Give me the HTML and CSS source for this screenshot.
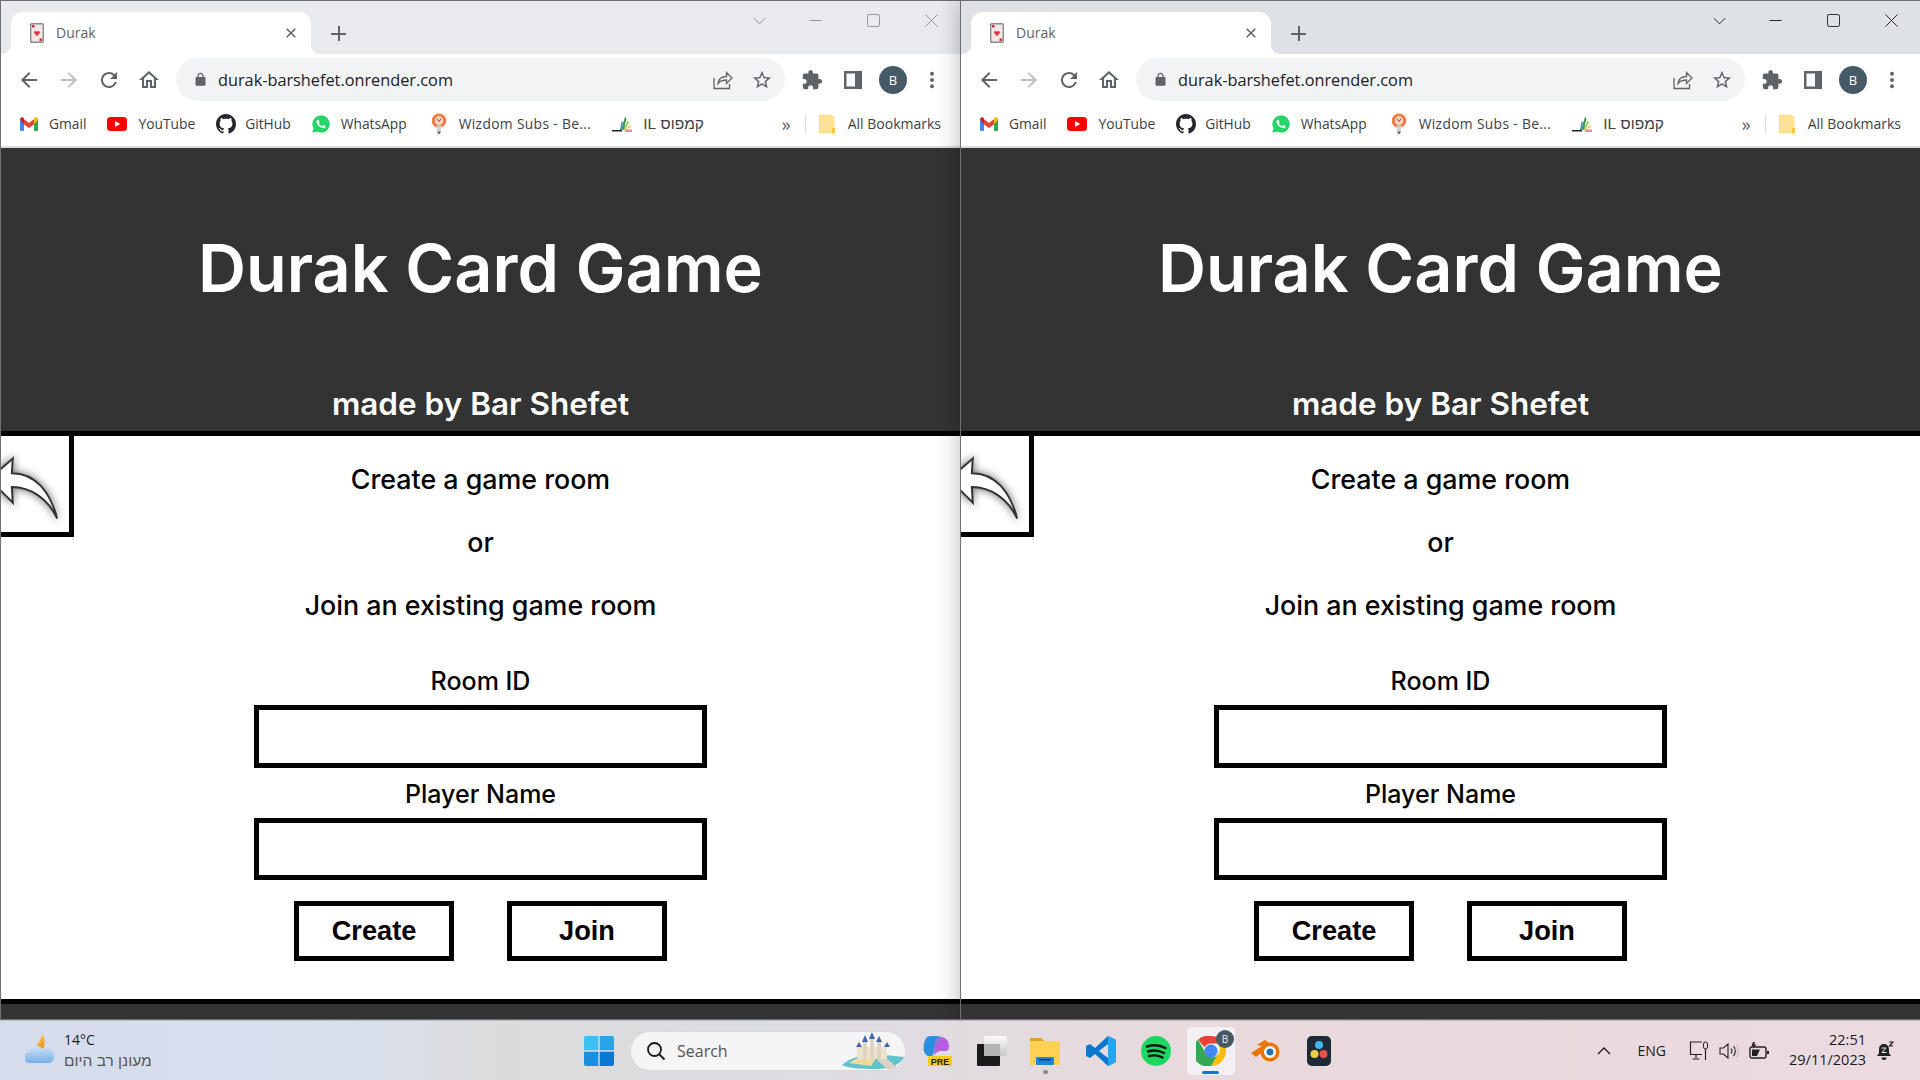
FILE: index.html
```html
<!DOCTYPE html>
<html lang="en">
<head>
    <meta charset="UTF-8">
    <title>Durak</title>
    <link rel="stylesheet" href="styles.css">
</head>
<body>
<!-- shared icons -->
<svg class="sprite" xmlns="http://www.w3.org/2000/svg">
    <defs>
        <linearGradient id="g-cloud" x1="0" y1="0" x2="0" y2="1"><stop offset="0" stop-color="#cfe3f9"/><stop offset="1" stop-color="#78b0e8"/></linearGradient>
        <linearGradient id="g-moon" x1="0" y1="0" x2="0" y2="1"><stop offset="0" stop-color="#fbc04a"/><stop offset="1" stop-color="#ef8f24"/></linearGradient>
        <linearGradient id="g-white" x1="0" y1="0" x2="0" y2="1"><stop offset="0" stop-color="#fafafa"/><stop offset="1" stop-color="#c9c9c9"/></linearGradient>
    </defs>
    <symbol id="i-card" viewBox="0 0 14 20">
        <rect x=".7" y=".7" width="12.6" height="18.6" rx="1" fill="#f3e6e6" stroke="#8a8a8a" stroke-width="1.4"/>
        <path d="M7 13.2 4.2 10c-1-1.5 1.6-3 2.8-1.2C8.2 7 10.800 8.500 9.800 10z" fill="#e0343f"/>
        <rect x="2" y="2" width="2.500" height="2.500" fill="#c8323c"/>
        <rect x="9.500" y="15.500" width="2.500" height="2.500" fill="#c8323c"/>
    </symbol>
    <symbol id="i-back" viewBox="0 0 24 24"><path d="M20 11H7.800l5.600-5.600L12 4l-8 8 8 8 1.400-1.400L7.800 13H20z"/></symbol>
    <symbol id="i-reload" viewBox="0 0 24 24"><path d="M17.650 6.350A7.958 7.958 0 0012 4c-4.420 0-7.990 3.580-7.990 8s3.570 8 7.990 8c3.730 0 6.840-2.550 7.730-6h-2.080A5.990 5.990 0 0112 18c-3.310 0-6-2.690-6-6s2.690-6 6-6c1.660 0 3.140.690 4.220 1.780L13 11h7V4l-2.350 2.350z"/></symbol>
    <symbol id="i-home" viewBox="0 0 24 24"><path d="M12 5.690l5 4.500V18h-2v-6H9v6H7v-7.810l5-4.500M12 3L2 12h3v8h6v-6h2v6h6v-8h3L12 3z"/></symbol>
    <symbol id="i-lock" viewBox="0 0 24 24"><path d="M18 8h-1V6c0-2.760-2.240-5-5-5S7 3.240 7 6v2H6c-1.100 0-2 .9-2 2v10c0 1.100.9 2 2 2h12c1.100 0 2-.9 2-2V10c0-1.100-.9-2-2-2zM9 6c0-1.660 1.340-3 3-3s3 1.340 3 3v2H9V6z"/></symbol>
    <symbol id="i-share" viewBox="0 0 20 20"><path d="M1 8v10.500h15.500V14M5 13.500c.5-4.500 4-7 8.500-7V2.500l5.500 5.500-5.500 5.500V10c-3.500 0-6.500 1-8.500 3.500z" fill="none" stroke="currentColor" stroke-width="1.300"/></symbol>
    <symbol id="i-star" viewBox="0 0 24 24"><path d="M22 9.240l-7.190-.62L12 2 9.190 8.630 2 9.240l5.460 4.730L5.820 21 12 17.270 18.180 21l-1.630-7.030L22 9.240zM12 15.400l-3.760 2.270 1-4.280-3.320-2.880 4.380-.38L12 6.100l1.710 4.040 4.380.38-3.320 2.880 1 4.280L12 15.400z"/></symbol>
    <symbol id="i-puzzle" viewBox="0 0 24 24"><path d="M20.500 11H19V7c0-1.100-.9-2-2-2h-4V3.500C13 2.120 11.880 1 10.500 1S8 2.120 8 3.500V5H4c-1.100 0-1.990.9-1.990 2v3.800H3.500c1.490 0 2.700 1.210 2.700 2.700s-1.210 2.700-2.700 2.700H2V20c0 1.100.9 2 2 2h3.800v-1.500c0-1.490 1.210-2.700 2.700-2.700 1.490 0 2.700 1.210 2.700 2.700V22H17c1.100 0 2-.9 2-2v-4h1.500c1.380 0 2.500-1.120 2.500-2.500S21.880 11 20.500 11z"/></symbol>
    <symbol id="i-panel" viewBox="0 0 18 18"><path fill-rule="evenodd" d="M0 0h18v18H0zM2.500 2.500v13H11v-13z"/></symbol>
    <symbol id="i-dots" viewBox="0 0 6 20"><circle cx="3" cy="3" r="2.200"/><circle cx="3" cy="10" r="2.200"/><circle cx="3" cy="17" r="2.200"/></symbol>
    <symbol id="i-x" viewBox="0 0 10 10"><path d="M.7.700l8.600 8.600M9.300.700.700 9.300" fill="none" stroke="currentColor" stroke-width="1.500"/></symbol>
    <symbol id="i-gmail" viewBox="0 0 18 14">
        <path d="M0 2.500 1.500.6 4 2.200V14H1.200C.5 14 0 13.500 0 12.800z" fill="#4285f4"/>
        <path d="M18 2.500 16.500.6 14 2.200V14h2.800c.7 0 1.200-.5 1.200-1.200z" fill="#34a853"/>
        <path d="M4 2.200 9 6l5-3.800V7.500L9 11 4 7.500z" fill="#ea4335"/>
        <path d="M0 2.500C0 .5 2.200-.5 3.500.6L4 2.200V7.500z" fill="#c5221f"/>
        <path d="M18 2.500C18 .5 15.800-.5 14.500.6L14 2.200V7.500z" fill="#fbbc04"/>
    </symbol>
    <symbol id="i-youtube" viewBox="0 0 20 14"><rect width="20" height="14" rx="3.500" fill="#f00"/><path d="M8 4l5.200 3L8 10z" fill="#fff"/></symbol>
    <symbol id="i-github" viewBox="0 0 16 16"><path fill="#24292f" d="M8 0C3.580 0 0 3.580 0 8c0 3.540 2.290 6.530 5.470 7.590.4.070.55-.17.55-.38 0-.19-.01-.82-.01-1.490-2.010.37-2.530-.49-2.690-.94-.09-.23-.48-.94-.82-1.130-.28-.15-.68-.52-.01-.53.63-.01 1.080.58 1.230.82.72 1.210 1.870.87 2.330.66.070-.52.28-.87.51-1.070-1.780-.2-3.640-.89-3.640-3.950 0-.87.31-1.590.82-2.150-.08-.2-.36-1.020.08-2.120 0 0 .67-.21 2.200.82.64-.18 1.320-.27 2-.27.68 0 1.360.090 2 .27 1.530-1.040 2.200-.82 2.200-.82.44 1.100.16 1.920.08 2.120.51.56.82 1.270.82 2.150 0 3.070-1.870 3.750-3.650 3.950.29.25.54.73.54 1.480 0 1.070-.01 1.930-.01 2.200 0 .21.15.46.55.38A8.013 8.013 0 0016 8c0-4.420-3.580-8-8-8z"/></symbol>
    <symbol id="i-whatsapp" viewBox="0 0 24 24"><path fill="#25d366" d="M12 .5a11.500 11.500 0 0 0-9.900 17.300L.5 23.500l5.900-1.500A11.500 11.500 0 1 0 12 .5z"/><path fill="#fff" d="M17.472 14.382c-.297-.149-1.758-.867-2.030-.967-.273-.099-.471-.148-.67.150-.197.297-.767.966-.94 1.164-.173.199-.347.223-.644.075-.297-.150-1.255-.463-2.390-1.475-.883-.788-1.480-1.761-1.653-2.059-.173-.297-.018-.458.130-.606.134-.133.298-.347.446-.520.149-.174.198-.298.298-.497.099-.198.050-.371-.025-.520-.075-.149-.669-1.612-.916-2.207-.242-.579-.487-.5-.669-.510-.173-.008-.371-.010-.570-.010-.198 0-.52.074-.792.372-.272.297-1.040 1.016-1.040 2.479 0 1.462 1.065 2.875 1.213 3.074.149.198 2.096 3.200 5.077 4.487.709.306 1.262.489 1.694.625.712.227 1.360.195 1.871.118.571-.085 1.758-.719 2.006-1.413.248-.694.248-1.289.173-1.413-.074-.124-.272-.198-.570-.347z"/></symbol>
    <symbol id="i-wizdom" viewBox="0 0 16 22"><circle cx="8" cy="8" r="7.500" fill="#ee7b43"/><circle cx="8" cy="8" r="4.500" fill="#f4d5c2"/><path d="M5.500 13h5l-.8 6h-3.400z" fill="#d8cfc6"/><path d="M6 19h4l-1 3H7z" fill="#777"/><path d="M6 6l2 3 2-3" fill="none" stroke="#a14f24" stroke-width="1"/></symbol>
    <symbol id="i-campus" viewBox="0 0 20 16"><path d="M0 14h10v1.500H0z" fill="#222"/><path d="M9 14 13 1l1.500 1-2.500 12z" fill="#3a9a4d"/><path d="M11 14l5-9 1 1.500L12.500 14z" fill="#8bc34a"/><path d="M12 14l6-5 .8 1.500L13.500 14z" fill="#f2c94c"/><path d="M13 13.500h7V16h-7z" fill="#ef8f9a"/><path d="M8 14 9.500 6 11 5l-1 9z" fill="#4a90c2"/></symbol>
    <symbol id="i-folder" viewBox="0 0 16 20"><path d="M1.500.5h11l3 3v14.500a1.500 1.500 0 0 1-1.500 1.500H1.500A1.500 1.500 0 0 1 0 18V2A1.500 1.500 0 0 1 1.500.5z" fill="#fde293"/><path d="M13 14h3v5.500h-3z" fill="#f6c945"/></symbol>
</svg>

<div class="desktop">

    <section class="window inactive">
        <div class="tabstrip">
            <div class="tab">
                <svg class="favicon"><use href="#i-card"/></svg>
                <span class="tab-title">Durak</span>
                <svg class="tab-close"><use href="#i-x"/></svg>
            </div>
            <span class="new-tab"></span>
            <svg class="win-btn tab-search" viewBox="0 0 14 8"><path d="M1 1l6 6 6-6" fill="none" stroke="currentColor"/></svg>
            <svg class="win-btn" viewBox="0 0 14 14"><path d="M.5 7h13" stroke="currentColor"/></svg>
            <svg class="win-btn" viewBox="0 0 14 14"><rect x=".5" y=".5" width="13" height="13" rx="2" fill="none" stroke="currentColor"/></svg>
            <svg class="win-btn" viewBox="0 0 14 14"><path d="M.5.5l13 13M13.500.5l-13 13" stroke="currentColor"/></svg>
        </div>
        <div class="toolbar">
            <svg class="tool"><use href="#i-back"/></svg>
            <svg class="tool disabled"><use href="#i-back" transform="rotate(180 12 12)"/></svg>
            <svg class="tool"><use href="#i-reload"/></svg>
            <svg class="tool"><use href="#i-home"/></svg>
            <div class="omnibox">
                <svg class="lock"><use href="#i-lock"/></svg>
                <span class="url">durak-barshefet.onrender.com</span>
                <svg class="omni-icon share"><use href="#i-share"/></svg>
                <svg class="omni-icon"><use href="#i-star"/></svg>
            </div>
            <svg class="tool puzzle"><use href="#i-puzzle"/></svg>
            <svg class="tool panel"><use href="#i-panel"/></svg>
            <span class="avatar">B</span>
            <svg class="tool dots"><use href="#i-dots"/></svg>
        </div>
        <div class="bookmarks">
            <a class="bm"><svg class="bm-icon gmail"><use href="#i-gmail"/></svg>Gmail</a>
            <a class="bm"><svg class="bm-icon youtube"><use href="#i-youtube"/></svg>YouTube</a>
            <a class="bm"><svg class="bm-icon github"><use href="#i-github"/></svg>GitHub</a>
            <a class="bm"><svg class="bm-icon whatsapp"><use href="#i-whatsapp"/></svg>WhatsApp</a>
            <a class="bm wizdom-link"><svg class="bm-icon wizdom"><use href="#i-wizdom"/></svg>Wizdom Subs - Be...</a>
            <a class="bm"><svg class="bm-icon campus"><use href="#i-campus"/></svg><span class="hebrew" dir="rtl">קמפוס IL</span></a>
            <span class="bm-more">»</span>
            <span class="bm-sep"></span>
            <a class="bm all"><svg class="bm-icon folder"><use href="#i-folder"/></svg>All Bookmarks</a>
        </div>
        <div class="page">
            <header class="site-header">
                <h1>Durak Card Game</h1>
                <h2>made by Bar Shefet</h2>
            </header>
            <main class="lobby">
                <button class="back-btn">
                    <svg class="back-arrow" viewBox="0 0 69 95"><path d="M12 21 -12 42 12 66 11 50C30 50 48 62 57 82 50 55 35 36 11 36Z"/></svg>
                </button>
                <p class="lead">Create a game room</p>
                <p class="lead">or</p>
                <p class="lead">Join an existing game room</p>
                <label class="field-label first">Room ID</label>
                <input class="field" type="text">
                <label class="field-label">Player Name</label>
                <input class="field second" type="text">
                <div class="actions">
                    <button class="action">Create</button>
                    <button class="action">Join</button>
                </div>
            </main>
            <footer class="site-footer"></footer>
        </div>
    </section>

    <section class="window active">
        <div class="tabstrip">
            <div class="tab">
                <svg class="favicon"><use href="#i-card"/></svg>
                <span class="tab-title">Durak</span>
                <svg class="tab-close"><use href="#i-x"/></svg>
            </div>
            <span class="new-tab"></span>
            <svg class="win-btn tab-search" viewBox="0 0 14 8"><path d="M1 1l6 6 6-6" fill="none" stroke="currentColor"/></svg>
            <svg class="win-btn" viewBox="0 0 14 14"><path d="M.5 7h13" stroke="currentColor"/></svg>
            <svg class="win-btn" viewBox="0 0 14 14"><rect x=".5" y=".5" width="13" height="13" rx="2" fill="none" stroke="currentColor"/></svg>
            <svg class="win-btn" viewBox="0 0 14 14"><path d="M.5.5l13 13M13.500.5l-13 13" stroke="currentColor"/></svg>
        </div>
        <div class="toolbar">
            <svg class="tool"><use href="#i-back"/></svg>
            <svg class="tool disabled"><use href="#i-back" transform="rotate(180 12 12)"/></svg>
            <svg class="tool"><use href="#i-reload"/></svg>
            <svg class="tool"><use href="#i-home"/></svg>
            <div class="omnibox">
                <svg class="lock"><use href="#i-lock"/></svg>
                <span class="url">durak-barshefet.onrender.com</span>
                <svg class="omni-icon share"><use href="#i-share"/></svg>
                <svg class="omni-icon"><use href="#i-star"/></svg>
            </div>
            <svg class="tool puzzle"><use href="#i-puzzle"/></svg>
            <svg class="tool panel"><use href="#i-panel"/></svg>
            <span class="avatar">B</span>
            <svg class="tool dots"><use href="#i-dots"/></svg>
        </div>
        <div class="bookmarks">
            <a class="bm"><svg class="bm-icon gmail"><use href="#i-gmail"/></svg>Gmail</a>
            <a class="bm"><svg class="bm-icon youtube"><use href="#i-youtube"/></svg>YouTube</a>
            <a class="bm"><svg class="bm-icon github"><use href="#i-github"/></svg>GitHub</a>
            <a class="bm"><svg class="bm-icon whatsapp"><use href="#i-whatsapp"/></svg>WhatsApp</a>
            <a class="bm wizdom-link"><svg class="bm-icon wizdom"><use href="#i-wizdom"/></svg>Wizdom Subs - Be...</a>
            <a class="bm"><svg class="bm-icon campus"><use href="#i-campus"/></svg><span class="hebrew" dir="rtl">קמפוס IL</span></a>
            <span class="bm-more">»</span>
            <span class="bm-sep"></span>
            <a class="bm all"><svg class="bm-icon folder"><use href="#i-folder"/></svg>All Bookmarks</a>
        </div>
        <div class="page">
            <header class="site-header">
                <h1>Durak Card Game</h1>
                <h2>made by Bar Shefet</h2>
            </header>
            <main class="lobby">
                <button class="back-btn">
                    <svg class="back-arrow" viewBox="0 0 69 95"><path d="M12 21 -12 42 12 66 11 50C30 50 48 62 57 82 50 55 35 36 11 36Z"/></svg>
                </button>
                <p class="lead">Create a game room</p>
                <p class="lead">or</p>
                <p class="lead">Join an existing game room</p>
                <label class="field-label first">Room ID</label>
                <input class="field" type="text">
                <label class="field-label">Player Name</label>
                <input class="field second" type="text">
                <div class="actions">
                    <button class="action">Create</button>
                    <button class="action">Join</button>
                </div>
            </main>
            <footer class="site-footer"></footer>
        </div>
    </section>
</div>

<div class="taskbar">
    <div class="weather">
        <svg class="weather-icon" viewBox="0 0 30 30">
            <path d="M17 0c3 4 4 10 1 16H0c5 1 10-2 13-6 2-3 3-6 4-10z" fill="url(#g-moon)"/>
            <path d="M5 29a5.500 5.500 0 0 1-1-11 8 8 0 0 1 14-3 7 7 0 0 1 7 14z" fill="url(#g-cloud)"/>
        </svg>
        <div class="weather-text">
            <span class="temp">14°C</span>
            <span class="forecast hebrew" dir="rtl">מעונן רב היום</span>
        </div>
    </div>

    <div class="task-icons">
        <svg class="start" viewBox="0 0 30 30">
            <path d="M0 2a2 2 0 0 1 2-2h12.300v14.300H0z" fill="#3cc0f2"/><path d="M15.700 0H28a2 2 0 0 1 2 2v12.300H15.700z" fill="#27a3ea"/>
            <path d="M0 15.700h14.300V30H2a2 2 0 0 1-2-2z" fill="#1a8fe0"/><path d="M15.700 15.700H30V28a2 2 0 0 1-2 2H15.700z" fill="#0a78d4"/>
        </svg>
        <div class="search-pill">
            <svg class="search-glass" viewBox="0 0 20 20"><circle cx="8.500" cy="8.500" r="6.500" fill="none" stroke="#1a1a1a" stroke-width="1.800"/><path d="M13.500 13.500l5 5" stroke="#1a1a1a" stroke-width="1.800"/></svg>
            <span class="search-text">Search</span>
            <svg class="search-art" viewBox="0 0 64 38">
                <path d="M1 33c8-7 20-11 34-11l28 3c-3 7-12 12-28 12-16 0-28-1-34-4z" fill="#5fc3c9"/>
                <path d="M8 31c8-6 18-8 28-6l-6 9z" fill="#efd9a0"/>
                <path d="M36 28l8-3 12 10-9 3z" fill="#d9d2c6"/>
                <path d="M16 15h30v12H16z" fill="#ece3d0"/>
                <path d="M22 10h4v17h-4zM36 10h4v17h-4zM29 7h4v20h-4z" fill="#dfd4bd"/>
                <path d="M24 3l-3 7h6zM38 4l-3 6h6zM31 0l-3 7h6zM18 10l-3 5h6zM46 10l-3 5h6z" fill="#3f66b0"/>
            </svg>
        </div>
        <div class="apps">
            <svg class="app" viewBox="0 0 30 30">
                <path d="M5 1c5-2 11-1 15 0-4 1-7 4-7 8 0 4-1 8-3 12-4 0-6-2-8-5C1 11 2 4 5 1z" fill="#2a8fe0"/>
                <path d="M20 1c4 1 7 4 7 9 0 3-1 5-3 5h-5c-3 0-6 2-7 5 1-5 0-11 1-14 1-3 4-5 7-5z" fill="#b55fe0"/>
                <path d="M13 10c0-3 2-6 5-7h2c-3 1-7 4-7 7z" fill="#38c7a0"/>
                <rect x="6" y="20" width="24" height="10" rx="1" fill="#ffcb1f"/>
                <text x="18" y="28.500" class="pre-label">PRE</text>
            </svg>
            <svg class="app" viewBox="0 0 30 30">
                <rect x="0" y="8" width="23" height="22" rx="1" fill="#1b1b1b"/>
                <rect x="7" y="0" width="23" height="20" rx="1" fill="url(#g-white)"/>
                <rect x="7" y="8" width="16" height="12" fill="#b5b5b5"/>
            </svg>
            <div class="app-slot open">
                <svg class="app" viewBox="0 0 30 30">
                    <path d="M0 2h11l3 3h-14z" fill="#e3a21a"/>
                    <rect x="0" y="5" width="30" height="24" rx="1" fill="#ffd152"/>
                    <rect x="6" y="21" width="18" height="8" rx="1" fill="#1c88d6"/>
                    <rect x="9" y="23" width="12" height="1.500" fill="#0d3f6e"/>
                </svg>
            </div>
            <svg class="app" viewBox="0 0 30 30">
                <path fill-rule="evenodd" d="M22 0 30 4V26L22 30 9 18 4 22 0 20V10L4 8 9 12zM22 8V22L13 15z" fill="#0a78cc"/>
                <path d="M22 0 30 4V26L22 30z" fill="#22a7f0"/>
            </svg>
            <svg class="app" viewBox="0 0 30 30">
                <circle cx="15" cy="15" r="15" fill="#1ed760"/>
                <path d="M6 10.500c6-2 13-1.500 18.500 1.500M7 15.500c5-1.500 11-1 16 1.500M8 20c4.500-1 9.500-.8 13.500 1.500" fill="none" stroke="#111" stroke-width="2.400" stroke-linecap="round"/>
            </svg>
            <div class="app-slot chrome-slot">
                <svg class="app" viewBox="0 0 30 30">
                    <path d="M15 0a15 15 0 0 1 13 7.500H15a7.500 7.500 0 0 0-6.500 3.800L2 3.800A15 15 0 0 1 15 0z" fill="#ea4335"/>
                    <path d="M28 7.500A15 15 0 0 1 15 30l6.500-11.200a7.500 7.500 0 0 0 0-11.300z" fill="#fbbc04"/>
                    <path d="M15 30A15 15 0 0 1 2 3.800l6.500 11.200a7.500 7.500 0 0 0 13 3.800z" fill="#34a853"/>
                    <circle cx="15" cy="15" r="6.500" fill="#4285f4"/>
                </svg>
                <span class="chrome-badge">B</span>
            </div>
            <svg class="app" viewBox="0 0 30 30">
                <circle cx="19" cy="16" r="9.500" fill="#ea7600"/>
                <circle cx="19" cy="16" r="6" fill="#fff"/>
                <circle cx="19" cy="16" r="3.500" fill="#2a6fb0"/>
                <path d="M0 17l11-7-5-1 8-5 4 3-8 10-5 4z" fill="#ea7600"/>
            </svg>
            <svg class="app resolve" viewBox="0 0 24 30">
                <rect width="24" height="30" rx="5" fill="#1e2a35"/>
                <circle cx="12" cy="9" r="4" fill="#40b8e8"/>
                <circle cx="7.500" cy="18" r="4" fill="#e8d24a"/>
                <circle cx="16.500" cy="18" r="4" fill="#e8524a"/>
            </svg>
        </div>
    </div>

    <div class="tray">
        <svg class="tray-icon caret" viewBox="0 0 14 8"><path d="M1 7l6-6 6 6" fill="none" stroke="#1a1a1a" stroke-width="1.300"/></svg>
        <span class="lang">ENG</span>
        <svg class="tray-icon monitor" viewBox="0 0 20 20"><path d="M13 1H1.500v12.500H13M7 13.500V17M3.500 18h7M16.500 8v11" fill="none" stroke="#222" stroke-width="1.200"/><rect x="14.500" y="1" width="4" height="7" rx="2" fill="none" stroke="#222"/></svg>
        <svg class="tray-icon speaker" viewBox="0 0 20 20"><path d="M1 7h3.500L9 3v14l-4.500-4H1zM12 7.500c1.200 1.500 1.200 3.500 0 5M14.500 5c2.200 3 2.200 7 0 10" fill="none" stroke="#222" stroke-width="1.100"/><path d="M17 3c3 4 3 10 0 14" fill="none" stroke="#bbb"/></svg>
        <svg class="tray-icon battery" viewBox="0 0 20 20"><rect x="1" y="6" width="16" height="11" rx="2" fill="none" stroke="#222" stroke-width="1.400"/><path d="M3 8.500h8l-3 6.500H3z" fill="#222"/><path d="M18 10h2v3h-2zM4 1 2.500 5 5 5 4 8l3.500-4.500H5L6 1z" fill="#222"/></svg>
        <div class="clock"><span>22:51</span><span>29/11/2023</span></div>
        <svg class="tray-icon bell" viewBox="0 0 18 20"><path d="M8 3c-3.500 0-5 2.500-5 5.500V12l-2 3h14l-2-3V8.500C13 5.500 11.500 3 8 3z" fill="#222"/><path d="M5.500 16.500h5a2.500 2.500 0 0 1-5 0z" fill="#222"/><path d="M5.500 7h4.500l-4 4.500h4.500" fill="none" stroke="#eee"/><path d="M13 1h4l-3.500 4H17" fill="none" stroke="#222" stroke-width="1.200"/></svg>
    </div>
</div>
</body>
</html>
```
FILE: styles.css
```css
* {
    box-sizing: border-box;
}

body {
    margin: 0;
    width: 1920px;
    height: 1080px;
    overflow: hidden;
    font-family: "Open Sans", "Liberation Sans", sans-serif;
    color: #202124;
}

.sprite {
    position: absolute;
    width: 0;
    height: 0;
}

.desktop {
    display: flex;
    height: 1020px;
}

.window {
    position: relative;
    display: flex;
    flex-direction: column;
    width: 960px;
    height: 1020px;
    border: 1px solid #6f6f6f;
    border-width: 1px 0 1px 1px;
    background: #fff;
}

.window.active {
    box-shadow: 0 0 22px rgba(0, 0, 0, .28);
    z-index: 1;
}

/* tab strip */
.tabstrip {
    display: flex;
    align-items: flex-start;
    height: 53px;
    padding: 11px 0 0 10px;
    background: #dee1e6;
    color: #1a1a1a;
}

.inactive .tabstrip {
    background: #e8eaed;
    color: #8b8d90;
}

.tab {
    position: relative;
    display: flex;
    align-items: center;
    width: 300px;
    height: 42px;
    padding: 0 15px 0 19px;
    background: #fff;
    border-radius: 12px 12px 0 0;
}

.tab::before,
.tab::after {
    content: "";
    position: absolute;
    bottom: 0;
    width: 10px;
    height: 10px;
}

.tab::before {
    left: -10px;
    background: radial-gradient(circle at 0 0, transparent 10px, #fff 10.500px);
}

.tab::after {
    right: -10px;
    background: radial-gradient(circle at 100% 0, transparent 10px, #fff 10.500px);
}

.favicon {
    width: 14px;
    height: 20px;
    flex: none;
}

.tab-title {
    flex: 1;
    margin: -2px 0 0 12px;
    font-size: 14px;
    color: #5f6368;
}

.tab-close {
    width: 10px;
    height: 10px;
    color: #5f6368;
}

.new-tab {
    position: relative;
    width: 15px;
    height: 15px;
    margin: 14px 0 0 20px;
    background:
        linear-gradient(#5f6368, #5f6368) center / 15px 2px no-repeat,
        linear-gradient(#5f6368, #5f6368) center / 2px 15px no-repeat;
}

.win-btn {
    flex: none;
    width: 13px;
    height: 13px;
    margin: 2px 0 0 45px;
}

.tab-search {
    margin-right: -2px;
    margin-top: 5px;
    height: 8px;
    margin-left: 407px;
}

/* toolbar */
.toolbar {
    display: flex;
    align-items: center;
    height: 51px;
    padding-left: 16px;
    background: #fff;
}

.tool {
    flex: none;
    width: 24px;
    height: 24px;
    margin-right: 16px;
    fill: #5f6368;
}

.tool.disabled {
    fill: #bdc1c6;
}

.omnibox {
    display: flex;
    align-items: center;
    width: 609px;
    height: 43px;
    margin-left: -1px;
    padding-left: 17px;
    background: #f1f3f4;
    border-radius: 22px;
}

.lock {
    width: 15px;
    height: 15px;
    fill: #5f6368;
}

.url {
    flex: 1;
    margin-left: 10px;
    font-size: 16.300px;
    color: #202124;
}

.omni-icon {
    width: 22px;
    height: 22px;
    margin-right: 12px;
    fill: #5f6368;
    color: #5f6368;
}

.omni-icon.share {
    width: 20px;
    height: 20px;
    margin-right: 18px;
}

.puzzle {
    margin: 0 0 0 16px;
    width: 22px;
}

.panel {
    width: 18px;
    height: 18px;
    margin: 0 0 0 21px;
}

.avatar {
    display: flex;
    align-items: center;
    justify-content: center;
    flex: none;
    width: 28px;
    height: 28px;
    margin-left: 17px;
    border-radius: 50%;
    background: #455a64;
    color: #fff;
    font-size: 13px;
}

.dots {
    width: 6px;
    height: 18px;
    margin: 0 0 0 22px;
}

/* bookmarks */
.bookmarks {
    display: flex;
    align-items: center;
    height: 43px;
    padding: 0 19px 4px 19px;
    border-bottom: 2px solid #dadce0;
}

.bm {
    display: flex;
    align-items: center;
    margin-right: 21px;
    font-size: 13.800px;
    color: #3c4043;
    white-space: nowrap;
}

.bm.all {
    margin-right: 0;
    font-size: 14px;
}

.wizdom-link {
    margin-left: 3px;
    letter-spacing: .35px;
}

.hebrew {
    font-family: "Liberation Sans", sans-serif;
}

.bm .hebrew {
    font-size: 15.500px;
}

.bm-icon {
    flex: none;
    margin-right: 11px;
}

.gmail { width: 18px; height: 14px; }
.youtube { width: 20px; height: 14px; }
.github { width: 20px; height: 20px; margin-right: 9px; }
.whatsapp { width: 18px; height: 18px; }
.wizdom { width: 16px; height: 21px; margin-right: 12px; }
.campus { width: 20px; height: 16px; }
.folder { width: 16px; height: 20px; margin-right: 13px; }

.bm-more {
    margin-left: auto;
    font-size: 18px;
    color: #5f6368;
}

.bm-sep {
    width: 1px;
    height: 20px;
    margin: 0 13px 0 14px;
    background: #dadce0;
}

/* the durak page */
.page {
    display: flex;
    flex-direction: column;
    flex: 1;
    background: #333;
}

.site-header {
    display: flex;
    flex-direction: column;
    align-items: center;
    height: 288px;
    padding-top: 85px;
    border-bottom: 5px solid #000;
    color: #fff;
    font-family: Inter, sans-serif;
}

h1 {
    margin: 0;
    font-size: 66.500px;
    font-weight: 600;
    line-height: 70px;
}

h2 {
    margin: 81px 0 0;
    font-size: 31.500px;
    font-weight: 600;
    line-height: 40px;
}

.lobby {
    position: relative;
    display: flex;
    flex-direction: column;
    align-items: center;
    height: 568px;
    padding-top: 25px;
    background: #fff;
    border-bottom: 5px solid #000;
    color: #000;
    font-family: Inter, sans-serif;
}

.back-btn {
    position: absolute;
    top: 0;
    left: 0;
    width: 73px;
    height: 101px;
    padding: 0;
    background: #fff;
    border: solid #000;
    border-width: 0 5px 5px 0;
    overflow: hidden;
}

.back-arrow {
    display: block;
    width: 68px;
    height: 95px;
    overflow: visible;
    fill: #fff;
    stroke: #333;
    stroke-width: 2;
    filter: drop-shadow(0 0 4px rgba(0, 0, 0, .6));
}

.lead {
    margin: 0 0 27px;
    font-size: 26.800px;
    font-weight: 500;
    line-height: 36px;
}

.field-label {
    margin-bottom: 9px;
    font-size: 25px;
    font-weight: 500;
    line-height: 30px;
}

.field-label.first {
    margin-top: 16px;
}

.field {
    display: block;
    width: 453px;
    height: 63px;
    margin-bottom: 11px;
    background: #fff;
    border: 5px solid #000;
    border-radius: 0;
}

.field.second {
    height: 62px;
    margin-bottom: 21px;
}

.actions {
    display: flex;
    gap: 53px;
}

.action {
    width: 160px;
    height: 60px;
    padding: 0;
    background: #fff;
    border: 5px solid #000;
    border-radius: 0;
    color: #000;
    font-family: "Liberation Sans", Arial, sans-serif;
    font-size: 27.200px;
    font-weight: 700;
}

.site-footer {
    flex: 1;
    background: #333;
}

/* windows taskbar */
.taskbar {
    position: relative;
    z-index: 2;
    display: flex;
    align-items: center;
    height: 60px;
    border-top: 1px solid #b8bbc0;
    background: linear-gradient(90deg, #d5dded 0, #d8e0ee 18%, #dcdbdc 26%, #dcdde3 40%, #e9d9dc 65%, #ebdbe1 100%);
}

.weather {
    display: flex;
    align-items: center;
    width: 584px;
    padding-left: 25px;
}

.weather-icon {
    width: 30px;
    height: 30px;
    margin-top: -3px;
}

.weather-text {
    display: flex;
    flex-direction: column;
    margin: -2px 0 0 9px;
    font-size: 14px;
    line-height: 21px;
}

.temp {
    color: #1a1a1a;
}

.forecast {
    color: #555;
    font-size: 15.500px;
}

.task-icons {
    display: flex;
    align-items: center;
}

.start {
    width: 30px;
    height: 30px;
}

.search-pill {
    display: flex;
    align-items: center;
    width: 274px;
    height: 38px;
    margin-left: 17px;
    padding-left: 15px;
    background: #f5f4f6;
    border-radius: 19px;
    box-shadow: 0 0 0 1px #dcd9dc;
}

.search-glass {
    width: 20px;
    height: 20px;
}

.search-text {
    flex: 1;
    margin-left: 11px;
    font-size: 16px;
    color: #555;
}

.search-art {
    width: 64px;
    height: 38px;
    overflow: visible;
}

.apps {
    display: flex;
    align-items: center;
    gap: 25px;
    margin-left: 17px;
}

.app {
    display: block;
    flex: none;
    width: 30px;
    height: 30px;
}

.pre-label {
    font-family: "Liberation Sans", sans-serif;
    font-size: 9px;
    font-weight: 700;
    text-anchor: middle;
    fill: #222;
}

.resolve {
    width: 24px;
    margin-left: 1px;
}

.app-slot {
    position: relative;
}

.app-slot.open {
    margin: 0 1px 0 -2px;
}

.app-slot.open::after {
    content: "";
    position: absolute;
    left: 13px;
    bottom: -8px;
    width: 5px;
    height: 4px;
    border-radius: 2px;
    background: #8a8a8a;
}

.chrome-slot {
    padding: 9px 9px;
    margin: 0 -9px;
    border-radius: 4px;
    background: #f3f0f3;
}

.chrome-slot::after {
    content: "";
    position: absolute;
    left: 15px;
    bottom: 1px;
    width: 17px;
    height: 3px;
    border-radius: 2px;
    background: #0a78d4;
}

.chrome-badge {
    position: absolute;
    top: 3px;
    right: 1px;
    display: flex;
    align-items: center;
    justify-content: center;
    width: 18px;
    height: 18px;
    border-radius: 50%;
    background: #455a64;
    color: #eee;
    font-size: 10px;
}

.tray {
    display: flex;
    align-items: center;
    margin-left: auto;
    padding-right: 26px;
    color: #1a1a1a;
}

.tray-icon {
    flex: none;
    width: 20px;
    height: 20px;
}

.caret {
    width: 14px;
    height: 8px;
}

.lang {
    margin: 0 23px 0 27px;
    font-size: 14px;
}

.speaker,
.battery {
    margin-left: 10px;
}

.clock {
    display: flex;
    flex-direction: column;
    align-items: flex-end;
    width: 97px;
    margin-top: -2px;
    font-size: 14.500px;
    line-height: 20px;
}

.bell {
    width: 18px;
    margin-left: 10px;
}
```
